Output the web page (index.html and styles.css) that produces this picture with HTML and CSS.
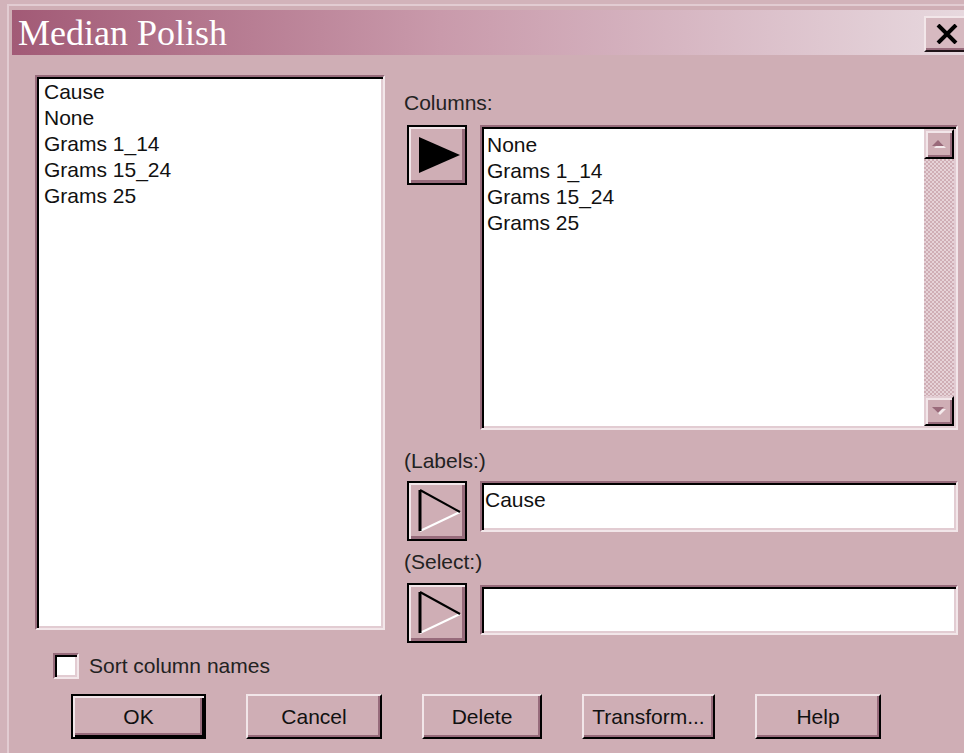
FILE: index.html
```html
<!DOCTYPE html>
<html lang="en">
<head>
<meta charset="utf-8">
<title>Median Polish</title>
<link rel="stylesheet" href="styles.css">
</head>
<body>
<div class="dialog">
  <div class="titlebar">
    <span class="title">Median Polish</span>
    <button class="close" type="button" aria-label="Close">
      <svg width="22" height="20" viewBox="0 0 22 20"><path d="M2 1 L20 19 M20 1 L2 19" stroke="#000" stroke-width="4" fill="none"/></svg>
    </button>
  </div>

  <div class="content">
    <div class="main">
      <ul class="field list source">
        <li>Cause</li>
        <li>None</li>
        <li>Grams 1_14</li>
        <li>Grams 15_24</li>
        <li>Grams 25</li>
      </ul>

      <div class="targets">
        <div class="label label-columns">Columns:</div>
        <div class="row">
          <button class="arrow" type="button" aria-label="Add columns">
            <svg width="60" height="60" viewBox="0 0 60 60"><polygon points="12,12 53,30 12,48" fill="#000"/></svg>
          </button>
          <div class="field columns">
            <ul class="list">
              <li>None</li>
              <li>Grams 1_14</li>
              <li>Grams 15_24</li>
              <li>Grams 25</li>
            </ul>
            <div class="scrollbar">
              <span class="sb-btn">
                <svg width="14" height="9" viewBox="0 0 14 9"><polygon points="2,8 14,8 8,2" fill="#f4eaec"/><polygon points="0,6 12,6 6,0" fill="#9a6a7a"/></svg>
              </span>
              <span class="sb-track"></span>
              <span class="sb-btn">
                <svg width="14" height="9" viewBox="0 0 14 9"><polygon points="2,2 14,2 8,8" fill="#f4eaec"/><polygon points="0,0 12,0 6,6" fill="#9a6a7a"/></svg>
              </span>
            </div>
          </div>
        </div>

        <div class="label label-labels">(Labels:)</div>
        <div class="row">
          <button class="arrow" type="button" aria-label="Set labels">
            <svg width="60" height="60" viewBox="0 0 60 60"><path d="M13 50 L53 31" stroke="#fff" stroke-width="2" fill="none"/><path d="M13 9 L53 31" stroke="#000" stroke-width="2" fill="none"/><path d="M13 9 L13 50" stroke="#000" stroke-width="3" fill="none"/></svg>
          </button>
          <div class="field text">Cause</div>
        </div>

        <div class="label label-select">(Select:)</div>
        <div class="row">
          <button class="arrow" type="button" aria-label="Set selection">
            <svg width="60" height="60" viewBox="0 0 60 60"><path d="M13 50 L53 31" stroke="#fff" stroke-width="2" fill="none"/><path d="M13 9 L53 31" stroke="#000" stroke-width="2" fill="none"/><path d="M13 9 L13 50" stroke="#000" stroke-width="3" fill="none"/></svg>
          </button>
          <div class="field text text-select"></div>
        </div>
      </div>
    </div>

    <label class="check"><span class="box"></span>Sort column names</label>

    <div class="buttons">
      <button class="btn btn-ok default" type="button">OK</button>
      <button class="btn btn-cancel" type="button">Cancel</button>
      <button class="btn btn-delete" type="button">Delete</button>
      <button class="btn btn-transform" type="button">Transform...</button>
      <button class="btn btn-help" type="button">Help</button>
    </div>
  </div>
</div>
</body>
</html>
```

FILE: styles.css
```css
/* Classic 3D dialog, drawn at double scale */
:root {
  --face: #cfaeb5;
  --light: #f2e6e9;
  --soft: #e2ccd2;
  --shadow: #976b7b;
  --dark: #000;
  --ink: #111;
}

* { box-sizing: border-box; }

html, body {
  margin: 0;
  width: 964px;
  height: 753px;
  overflow: hidden;
  background: #d2b3ba;
}

body {
  font-family: "Liberation Sans", Arial, sans-serif;
  font-size: 21px;
  color: var(--ink);
}

.dialog {
  margin: 4px 0 0 7px;
  height: 749px;
  border-top: 2px solid var(--soft);
  border-left: 2px solid var(--soft);
  padding: 4px 0 0 3px;
  background: var(--face);
  overflow: hidden;
}

/* Caption bar */
.titlebar {
  height: 45px;
  display: flex;
  align-items: center;
  justify-content: space-between;
  background: linear-gradient(to right, #a25a76 0%, #c99aab 45%, #e7d8de 100%);
}

.title {
  padding-left: 6px;
  font-family: "Liberation Serif", "Times New Roman", serif;
  font-size: 36px;
  line-height: 1;
  color: #fff;
}

.close {
  width: 40px;
  height: 36px;
  margin: 2px 0 0;
  padding: 0 0 0 4px;
  display: flex;
  align-items: center;
  justify-content: center;
  border: 0;
  border-top: 2px solid var(--light);
  border-left: 2px solid var(--light);
  border-bottom: 2px solid #201418;
  background: #d6b9c0;
  box-shadow: inset 0 -2px 0 var(--shadow);
}

.close svg { display: block; }

/* Body of the dialog */
.content {
  padding: 20px 0 0 23px;
}

.main {
  display: flex;
  align-items: flex-start;
}

/* Sunken white field */
.field {
  background: #fff;
  border: 2px solid;
  border-color: var(--shadow) var(--light) var(--light) var(--shadow);
  box-shadow: inset 2px 2px 0 var(--dark), inset -2px -2px 0 var(--soft);
}

.list {
  margin: 0;
  list-style: none;
  line-height: 26px;
}

.list li { white-space: nowrap; }

.source {
  width: 350px;
  height: 555px;
  padding: 2px 0 0 7px;
}

.targets {
  margin-left: 18px;
  width: 556px;
}

.label {
  line-height: 26px;
  padding-left: 1px;
  color: #222;
}

.label-columns { margin-top: 15px; }
.label-labels { margin-top: 18px; }
.label-select { margin-top: 8px; }

.row {
  display: flex;
  align-items: flex-start;
  margin-top: 7px;
}

.label-columns + .row { margin-top: 9px; }
.label-select + .row { margin-top: 8px; }

/* Move-to buttons with a triangle */
.arrow {
  width: 60px;
  height: 60px;
  margin: 0 13px 0 4px;
  padding: 0;
  border: 0;
  flex: none;
  background: var(--face);
  box-shadow: inset 0 0 0 2px var(--dark), inset 4px 4px 0 var(--light), inset -5px -5px 0 var(--shadow);
}

.arrow svg { display: block; }

.columns {
  width: 478px;
  height: 305px;
  display: flex;
  justify-content: space-between;
  padding: 2px 2px 2px 2px;
}

.columns .list {
  padding: 3px 0 0 3px;
}

.scrollbar {
  width: 30px;
  display: flex;
  flex-direction: column;
}

.sb-btn {
  height: 30px;
  flex: none;
  display: flex;
  align-items: center;
  justify-content: center;
  background: var(--face);
  border: 2px solid;
  border-color: var(--soft) var(--dark) var(--dark) var(--soft);
  box-shadow: inset 2px 2px 0 var(--light), inset -2px -2px 0 var(--shadow);
}

.sb-btn svg { display: block; }

.sb-track {
  flex: 1;
  background-color: var(--face);
  background-image: repeating-conic-gradient(#e6d3d8 0 25%, transparent 0 50%);
  background-size: 4px 4px;
}

.text {
  width: 478px;
  height: 51px;
  padding: 4px 0 0 3px;
  line-height: 26px;
}

.text-select {
  height: 50px;
  margin-top: 2px;
}

/* Checkbox */
.check {
  display: flex;
  align-items: center;
  margin: 10px 0 0 18px;
  line-height: 26px;
  height: 26px;
  color: #222;
}

.box {
  width: 26px;
  height: 26px;
  margin-right: 10px;
  background: #fff;
  border: 2px solid;
  border-color: var(--shadow) var(--light) var(--light) var(--shadow);
  box-shadow: inset 2px 2px 0 var(--dark), inset -2px -2px 0 var(--soft);
}

/* Command buttons */
.buttons {
  display: flex;
  gap: 40px;
  margin: 15px 0 0 36px;
}

.btn {
  height: 45px;
  padding: 0;
  font: inherit;
  color: var(--ink);
  background: var(--face);
  border: 2px solid;
  border-color: var(--light) var(--dark) var(--dark) var(--light);
  box-shadow: inset -2px -2px 0 var(--shadow);
}

.btn.default {
  border-color: var(--dark);
  box-shadow: inset 2px 2px 0 var(--light), inset -2px -2px 0 var(--dark), inset -4px -4px 0 var(--shadow);
}

.btn-ok { width: 135px; }
.btn-cancel { width: 136px; }
.btn-delete { width: 120px; }
.btn-transform { width: 133px; }
.btn-help { width: 126px; }
```
